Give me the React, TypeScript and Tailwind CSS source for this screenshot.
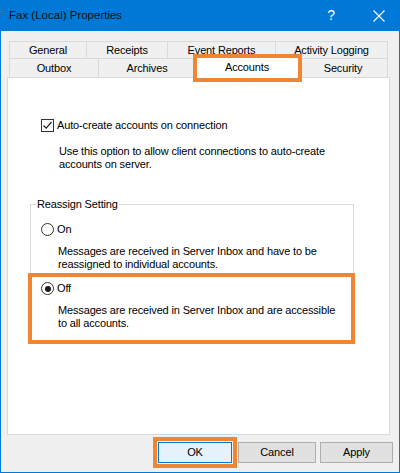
// Fax (Local) Properties dialog
const font = "font-['Liberation_Sans',Arial,sans-serif]";

const row1 = [
  { label: 'General', w: 'w-[77px]' },
  { label: 'Receipts', w: 'w-[81px]' },
  { label: 'Event Reports', w: 'w-[108px]' },
  { label: 'Activity Logging', w: 'w-[113px]' },
];

function Radio({ checked }: { checked?: boolean }) {
  return (
    <span className="w-[13px] h-[13px] rounded-full border border-[#333333] bg-white flex items-center justify-center shrink-0">
      {checked && <span className="w-[6px] h-[6px] rounded-full bg-[#1a1a1a]"></span>}
    </span>
  );
}

function Checkbox() {
  return (
    <span className="w-[13px] h-[13px] border border-[#333333] bg-white flex items-center justify-center shrink-0">
      <svg width="11" height="11" viewBox="0 0 11 11">
        <path d="M1.5 5.5 L4.2 8.2 L9.5 2" fill="none" stroke="#222" strokeWidth="1.2" />
      </svg>
    </span>
  );
}

export default function App() {
  return (
    <div className={`w-[400px] h-[473px] flex flex-col bg-[#f0f0f0] text-[11px] tracking-[-0.15px] text-black ${font}`}>
      {/* title bar */}
      <div className="h-[31px] shrink-0 bg-[#0078d7] flex items-center pl-[9px]">
        <span className="text-[11.5px] tracking-normal text-[#111]">Fax (Local) Properties</span>
        <span className="ml-auto text-[14px] text-white mr-[38px]">?</span>
        <svg width="12" height="12" viewBox="0 0 12 12" className="mr-[15px]">
          <path d="M0.5 0.5 L11.5 11.5 M11.5 0.5 L0.5 11.5" stroke="#fff" strokeWidth="1.1" />
        </svg>
      </div>

      <div className="flex-1 flex flex-col border-x border-b border-[#0078d7]">
        {/* tabs */}
        <div className="mt-[10px] ml-[6px] w-[383px] px-[2px]">
          <div className="flex h-[17px]">
            {row1.map((t, i) => (
              <div
                key={t.label}
                className={`${t.w} border-t border-l border-[#d9d9d9] flex items-center justify-center ${i === row1.length - 1 ? 'border-r' : ''}`}
              >
                {t.label}
              </div>
            ))}
          </div>
          <div className="flex h-[19px] border-t border-[#d9d9d9]">
            <div className="w-[89px] border-l border-[#d9d9d9] flex items-center justify-center pt-[1px]">Outbox</div>
            <div className="w-[97px] border-l border-[#d9d9d9] flex items-center justify-center pt-[1px]">Archives</div>
            <div className="w-[104px] relative">
              <div className="absolute -left-[2px] -right-[2px] -top-[2px] -bottom-[1px] bg-white border-x border-t border-[#d9d9d9] z-10 flex justify-center pt-[1px]">
                Accounts
              </div>
              <div className="absolute -left-[2px] -top-[5px] w-[109px] h-[28px] border-[4px] border-[#ef8633] z-20"></div>
            </div>
            <div className="w-[89px] border-r border-[#d9d9d9] flex items-center justify-center pt-[1px]">Security</div>
          </div>
        </div>

        {/* panel */}
        <div className="ml-[6px] w-[383px] h-[358px] bg-white border border-[#d9d9d9] flex flex-col">
          <div className="mt-[41px] ml-[33px] flex items-center gap-[3px] h-[13px]">
            <Checkbox />
            <span>Auto-create accounts on connection</span>
          </div>
          <div className="mt-[13px] ml-[51px] leading-[13px]">
            Use this option to allow client connections to auto-create
            <br />
            accounts on server.
          </div>

          <div className="relative mt-[33px] ml-[22px] w-[324px] border border-[#dcdcdc] pt-[18px]">
            <span className="absolute left-[5px] -top-[7px] bg-white px-[1px] leading-[13px]">Reassign Setting</span>
            <div className="ml-[10px] flex items-center gap-[3px] h-[13px]">
              <Radio />
              <span>On</span>
            </div>
            <div className="mt-[9px] ml-[27px] leading-[13px]">
              Messages are received in Server Inbox and have to be
              <br />
              reassigned to individual accounts.
            </div>
            <div className="relative mt-[2px] -ml-[3px] -mr-[2px] -mb-[2px] border-[4px] border-[#ef8633] pt-[5px] pb-[10px] bg-white">
              <div className="ml-[9px] flex items-center gap-[3px] h-[13px]">
                <Radio checked />
                <span>Off</span>
              </div>
              <div className="mt-[9px] ml-[26px] leading-[13px]">
                Messages are received in Server Inbox and are accessible
                <br />
                to all accounts.
              </div>
            </div>
          </div>
        </div>

        {/* buttons */}
        <div className="mt-[2px] flex items-center justify-end pr-[6px]">
          <div className="border-[4px] border-[#ef8633] p-[1px]">
            <button className="w-[74px] h-[21px] bg-[#e5f1fb] border border-[#0078d7] flex items-center justify-center">OK</button>
          </div>
          <button className="ml-[1px] w-[78px] h-[21px] bg-[#e1e1e1] border border-[#adadad] flex items-center justify-center">Cancel</button>
          <button className="ml-[4px] w-[73px] h-[21px] bg-[#e1e1e1] border border-[#adadad] flex items-center justify-center">Apply</button>
        </div>
      </div>
    </div>
  );
}
